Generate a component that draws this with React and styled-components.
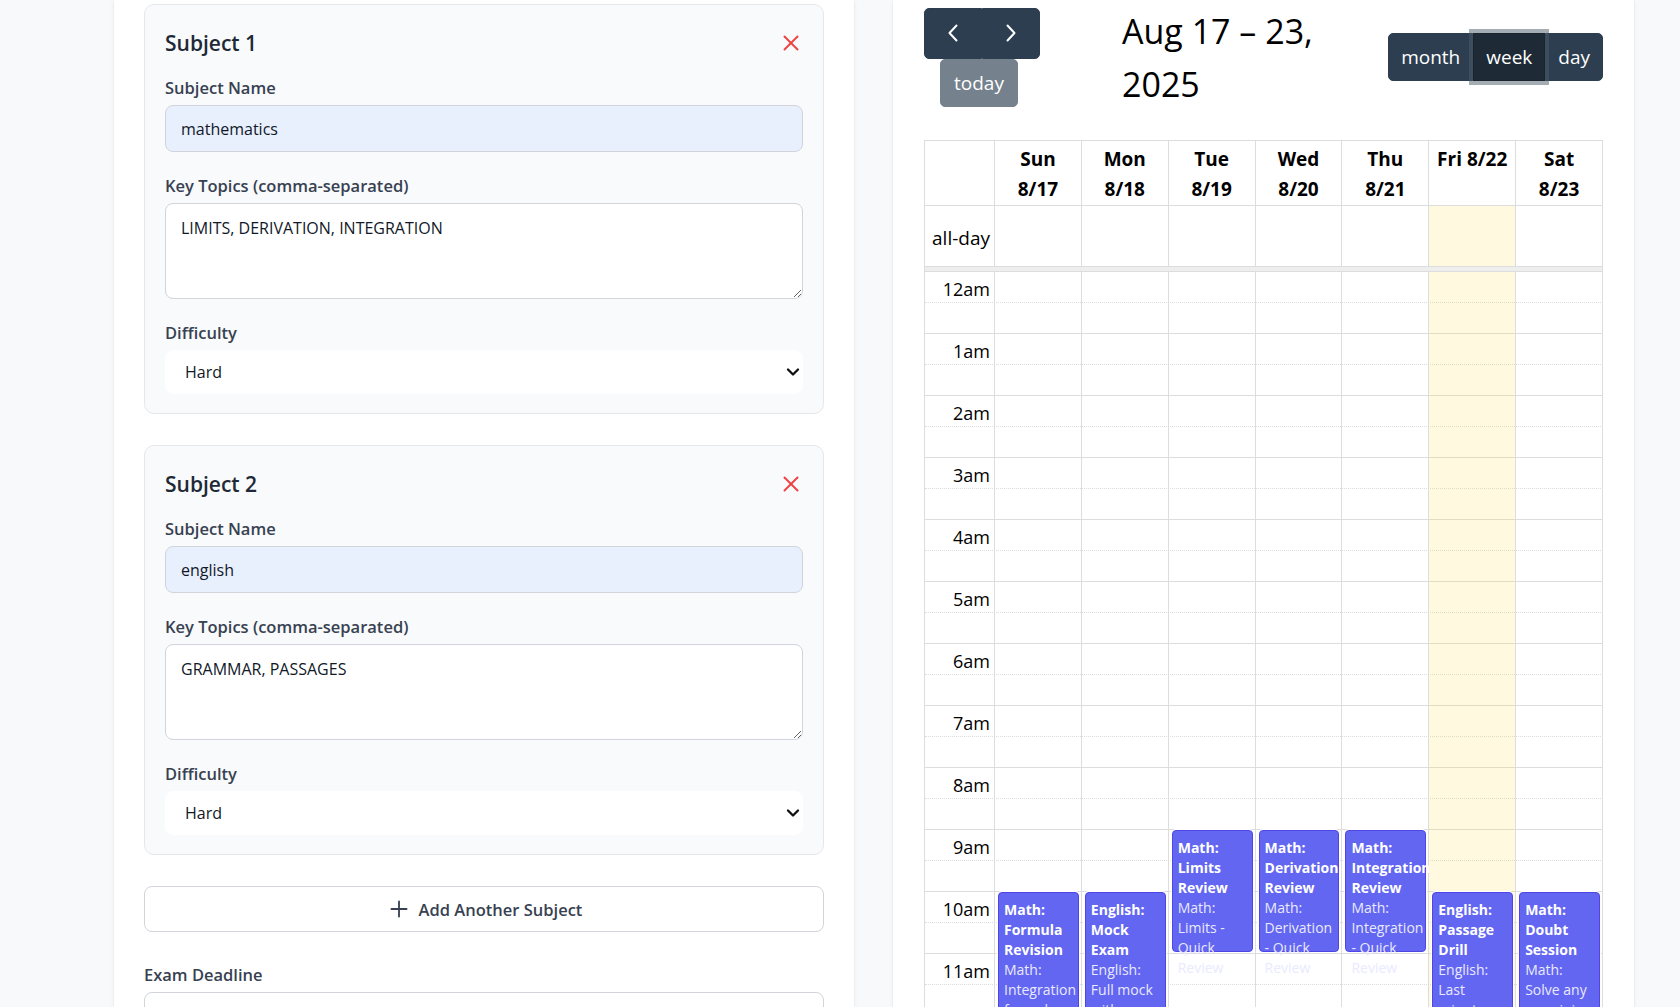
import React from 'react';
import styled, { createGlobalStyle, css } from 'styled-components';
import { Plus, ChevronDown } from 'lucide-react';

const GlobalStyle = createGlobalStyle`
  html, body { margin: 0; padding: 0; }
  body {
    background: #f8f9fb;
    font-family: "Open Sans", "Noto Sans", Arial, sans-serif;
    color: #111827;
  }
  *, *::before, *::after { box-sizing: border-box; }
`;

const Page = styled.div`
  height: 100vh;
  overflow: hidden;
  display: flex;
  align-items: stretch;
  gap: 39px;
  padding: 0 46px 0 114px;
`;

const Panel = styled.section`
  flex: none;
  width: ${(p) => p.$w}px;
  background: #ffffff;
  box-shadow: 0 1px 4px rgba(15, 23, 42, 0.07), 0 0 1px rgba(15, 23, 42, 0.08);
  padding: 4px ${(p) => p.$px}px 40px;
`;

/* ---------- Left: subject form ---------- */

const FormStack = styled.div`
  display: flex;
  flex-direction: column;
  gap: 31px;
`;

const Card = styled.div`
  background: #f9fafb;
  border: 1px solid #e5e7eb;
  border-radius: 10px;
  padding: 20px 20px 19px;
`;

const CardHeader = styled.div`
  height: 36px;
  display: flex;
  align-items: center;
  justify-content: space-between;
  margin-bottom: 15px;
`;

const CardTitle = styled.h3`
  margin: 0;
  font-size: 21px;
  line-height: 30px;
  font-weight: 600;
  color: #1f2937;
`;

const RemoveButton = styled.button`
  border: none;
  background: transparent;
  padding: 4px;
  display: flex;
  cursor: pointer;
`;

const Fields = styled.div`
  display: flex;
  flex-direction: column;
  gap: 22px;
`;

const Field = styled.label`
  display: flex;
  flex-direction: column;
  gap: 5px;
`;

const Label = styled.span`
  font-size: 16.5px;
  line-height: 24px;
  font-weight: 600;
  color: #374151;
`;

const controlBase = css`
  width: 100%;
  border: 1px solid #d1d5db;
  border-radius: 8px;
  font-family: "Open Sans", "Noto Sans", Arial, sans-serif;
  font-size: 16px;
  color: #111827;
  outline: none;
`;

const TextInput = styled.input`
  ${controlBase};
  height: ${(p) => p.$h || 47}px;
  padding: 0 15px;
  background: ${(p) => (p.$filled ? '#e8f0fe' : '#ffffff')};
`;

const TextArea = styled.textarea`
  ${controlBase};
  height: 96px;
  padding: 12px 15px;
  line-height: 24px;
  background: #ffffff;
  resize: vertical;
  display: block;
`;

const SelectWrap = styled.div`
  position: relative;
`;

const Select = styled.select`
  ${controlBase};
  height: 44px;
  border-color: #ffffff;
  padding: 0 19px;
  background: #ffffff;
  appearance: none;
  -webkit-appearance: none;
`;

const SelectChevron = styled(ChevronDown)`
  position: absolute;
  right: 0;
  top: 12px;
  pointer-events: none;
  color: #111;
`;

const AddButton = styled.button`
  height: 46px;
  width: 100%;
  background: #ffffff;
  border: 1px solid #d1d5db;
  border-radius: 8px;
  display: flex;
  align-items: center;
  justify-content: center;
  gap: 7px;
  font-family: "Open Sans", "Noto Sans", Arial, sans-serif;
  font-size: 16.5px;
  font-weight: 600;
  color: #374151;
  cursor: pointer;
`;

/* ---------- Right: calendar ---------- */

const Toolbar = styled.div`
  display: flex;
  align-items: center;
  margin-bottom: 30px;
`;

const NavChunk = styled.div`
  flex: none;
  width: 114px;
  display: flex;
  flex-wrap: wrap;
`;

const ButtonGroup = styled.div`
  display: flex;
  margin-left: ${(p) => (p.$end ? 'auto' : '0')};
`;

const fcButton = css`
  height: ${(p) => p.$h || 48}px;
  padding: 0 ${(p) => (p.$px == null ? 12 : p.$px)}px;
  display: flex;
  align-items: center;
  justify-content: center;
  font-family: "Open Sans", "Noto Sans", Arial, sans-serif;
  font-size: 19px;
  font-weight: 400;
  color: #ffffff;
  cursor: pointer;
`;

const GroupButton = styled.button`
  ${fcButton};
  background: ${(p) => (p.$active ? '#1e2b37' : '#2c3e50')};
  border: 1px solid ${(p) => (p.$active ? '#1a252f' : '#2c3e50')};
  border-radius: 0;
  &:first-child {
    border-top-left-radius: 5px;
    border-bottom-left-radius: 5px;
  }
  &:last-child {
    border-top-right-radius: 5px;
    border-bottom-right-radius: 5px;
  }
  ${(p) =>
    p.$active &&
    css`
      position: relative;
      z-index: 1;
      box-shadow: 0 0 0 4px rgba(76, 91, 106, 0.5);
    `}
`;

const TodayButton = styled.button`
  ${fcButton};
  margin-left: 16px;
  background: #2c3e50;
  border: 1px solid #2c3e50;
  border-radius: 5px;
  opacity: 0.65;
`;

const Title = styled.h2`
  flex: none;
  width: 200px;
  margin: 1px 0 0 84px;
  font-size: 34px;
  line-height: 52.5px;
  font-weight: 400;
  color: #000000;
`;

const Grid = styled.div`
  border-top: 1px solid #ddd;
  border-left: 1px solid #ddd;
`;

const Row = styled.div`
  display: grid;
  grid-template-columns: 70px repeat(7, 1fr);
`;

const HeadCell = styled.div`
  border-right: 1px solid #ddd;
  border-bottom: 1px solid #ddd;
  padding: 3px 4px 1px;
  text-align: center;
  font-size: 19px;
  line-height: 30px;
  font-weight: 700;
  color: #000;
`;

const HeadLine = styled.div`
  white-space: nowrap;
`;

const AllDayCell = styled.div`
  height: 61px;
  border-right: 1px solid #ddd;
  border-bottom: 1px solid #ddd;
  background: ${(p) => (p.$today ? 'rgba(255, 220, 40, 0.15)' : 'transparent')};
  display: flex;
  align-items: center;
  justify-content: flex-end;
  padding: 4px 4px 0 0;
  font-size: 19px;
  color: #000;
`;

const Divider = styled.div`
  height: 5px;
  background: #eee;
  border-right: 1px solid #ddd;
  border-bottom: 1px solid #ddd;
`;

const TimeBody = styled.div`
  display: grid;
  & > * {
    grid-area: 1 / 1;
  }
`;

const SlotLayer = styled.div`
  display: flex;
  flex-direction: column;
`;

const SlotRow = styled.div`
  height: 31px;
  border-bottom: 1px ${(p) => (p.$minor ? 'dotted' : 'solid')} #ddd;
  border-right: 1px solid #ddd;
`;

const SlotLabel = styled.div`
  width: 70px;
  text-align: right;
  padding: 2px 5px 0 0;
  font-size: 18px;
  line-height: 30px;
  color: #000;
  white-space: nowrap;
`;

const ColumnLayer = styled(Row)``;

const DayColumn = styled.div`
  position: relative;
  border-right: 1px solid #ddd;
  background: ${(p) => (p.$today ? 'rgba(255, 220, 40, 0.15)' : 'transparent')};
`;

const Event = styled.div`
  position: absolute;
  left: 3px;
  right: 2px;
  background: #6366f1;
  border: 1px solid #4f46e5;
  border-radius: 4px;
  box-shadow: 0 0 0 1px #ffffff;
  padding: 7px 5px 0;
  font-size: 14px;
  line-height: 20px;
  color: #ffffff;
`;

const EventTitle = styled.div`
  font-weight: 700;
`;

const EventDesc = styled.div`
  color: #e9eaff;
`;

/* ---------- data ---------- */

const subjects = [
  { id: 1, name: 'mathematics', topics: 'LIMITS, DERIVATION, INTEGRATION', difficulty: 'Hard' },
  { id: 2, name: 'english', topics: 'GRAMMAR, PASSAGES', difficulty: 'Hard' },
];

const days = [
  { lines: ['Sun', '8/17'] },
  { lines: ['Mon', '8/18'] },
  { lines: ['Tue', '8/19'] },
  { lines: ['Wed', '8/20'] },
  { lines: ['Thu', '8/21'] },
  { lines: ['Fri 8/22'], today: true },
  { lines: ['Sat', '8/23'] },
];

const events = [
  { day: 0, start: 10, end: 12, title: 'Math: Formula Revision', desc: 'Math: Integration formulas revision' },
  { day: 1, start: 10, end: 12, title: 'English: Mock Exam', desc: 'English: Full mock with timing' },
  { day: 2, start: 9, end: 11, title: 'Math: Limits Review', desc: 'Math: Limits - Quick Review' },
  { day: 3, start: 9, end: 11, title: 'Math: Derivation Review', desc: 'Math: Derivation - Quick Review' },
  { day: 4, start: 9, end: 11, title: 'Math: Integration Review', desc: 'Math: Integration - Quick Review' },
  { day: 5, start: 10, end: 12, title: 'English: Passage Drill', desc: 'English: Last minute passage practice' },
  { day: 6, start: 10, end: 12, title: 'Math: Doubt Session', desc: 'Math: Solve any remaining doubts' },
];

const HOUR = 62;

const hourLabel = (h) => {
  if (h === 0) return '12am';
  if (h < 12) return `${h}am`;
  if (h === 12) return '12pm';
  return `${h - 12}pm`;
};

const CloseIcon = () => (
  <svg width="16" height="16" viewBox="0 0 16 16" fill="none" stroke="#ef4444" strokeWidth="2" strokeLinecap="round">
    <line x1="1.5" y1="1.5" x2="14.5" y2="14.5" />
    <line x1="14.5" y1="1.5" x2="1.5" y2="14.5" />
  </svg>
);

const Chevron = ({ dir }) => (
  <svg width="12" height="18" viewBox="0 0 12 18" fill="none" stroke="#ffffff" strokeWidth="2" strokeLinecap="round" strokeLinejoin="round">
    {dir === 'left' ? <polyline points="9.5,1.5 2.5,9 9.5,16.5" /> : <polyline points="2.5,1.5 9.5,9 2.5,16.5" />}
  </svg>
);

function SubjectCard({ index, subject }) {
  return (
    <Card>
      <CardHeader>
        <CardTitle>Subject {index}</CardTitle>
        <RemoveButton aria-label="Remove subject">
          <CloseIcon />
        </RemoveButton>
      </CardHeader>
      <Fields>
        <Field>
          <Label>Subject Name</Label>
          <TextInput $filled defaultValue={subject.name} />
        </Field>
        <Field>
          <Label>Key Topics (comma-separated)</Label>
          <TextArea defaultValue={subject.topics} />
        </Field>
        <Field>
          <Label>Difficulty</Label>
          <SelectWrap>
            <Select defaultValue={subject.difficulty}>
              <option>Easy</option>
              <option>Medium</option>
              <option>Hard</option>
            </Select>
            <SelectChevron size={20} strokeWidth={2.8} />
          </SelectWrap>
        </Field>
      </Fields>
    </Card>
  );
}

function Calendar() {
  const hours = Array.from({ length: 24 }, (_, i) => i);
  return (
    <>
      <Toolbar>
        <NavChunk>
          <ButtonGroup>
            <GroupButton $h={51} $px={22} aria-label="prev">
              <Chevron dir="left" />
            </GroupButton>
            <GroupButton $h={51} $px={22} aria-label="next">
              <Chevron dir="right" />
            </GroupButton>
          </ButtonGroup>
          <TodayButton $px={13} disabled>today</TodayButton>
        </NavChunk>
        <Title>Aug 17 – 23, 2025</Title>
        <ButtonGroup $end>
          <GroupButton>month</GroupButton>
          <GroupButton $active>week</GroupButton>
          <GroupButton>day</GroupButton>
        </ButtonGroup>
      </Toolbar>

      <Grid>
        <Row>
          <HeadCell />
          {days.map((d, i) => (
            <HeadCell key={i}>
              {d.lines.map((l) => (
                <HeadLine key={l}>{l}</HeadLine>
              ))}
            </HeadCell>
          ))}
        </Row>
        <Row>
          <AllDayCell>all-day</AllDayCell>
          {days.map((d, i) => (
            <AllDayCell key={i} $today={d.today} />
          ))}
        </Row>
        <Divider />
        <TimeBody>
          <SlotLayer>
            {hours.map((h) => (
              <React.Fragment key={h}>
                <SlotRow $minor>
                  <SlotLabel>{hourLabel(h)}</SlotLabel>
                </SlotRow>
                <SlotRow />
              </React.Fragment>
            ))}
          </SlotLayer>
          <ColumnLayer>
            <DayColumn />
            {days.map((d, i) => (
              <DayColumn key={i} $today={d.today}>
                {events
                  .filter((e) => e.day === i)
                  .map((e) => (
                    <Event
                      key={e.title}
                      style={{ top: e.start * HOUR, height: (e.end - e.start) * HOUR - 2 }}
                    >
                      <EventTitle>{e.title}</EventTitle>
                      <EventDesc>{e.desc}</EventDesc>
                    </Event>
                  ))}
              </DayColumn>
            ))}
          </ColumnLayer>
        </TimeBody>
      </Grid>
    </>
  );
}

export default function App() {
  return (
    <>
      <GlobalStyle />
      <Page>
        <Panel $w={740} $px={30}>
          <FormStack>
            {subjects.map((s, i) => (
              <SubjectCard key={s.id} index={i + 1} subject={s} />
            ))}
            <AddButton>
              <Plus size={26} strokeWidth={1.7} />
              Add Another Subject
            </AddButton>
            <Field>
              <Label>Exam Deadline</Label>
              <TextInput $h={46} defaultValue="2025-08-23" />
            </Field>
          </FormStack>
        </Panel>
        <Panel $w={741} $px={31}>
          <Calendar />
        </Panel>
      </Page>
    </>
  );
}
